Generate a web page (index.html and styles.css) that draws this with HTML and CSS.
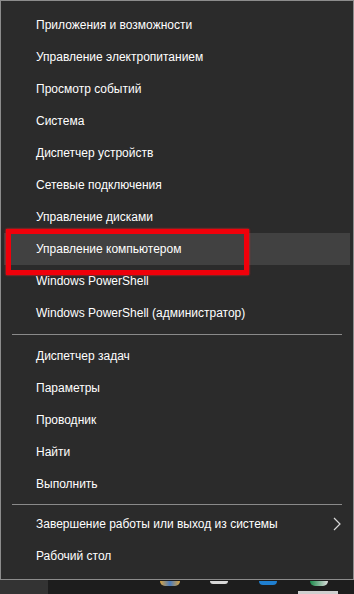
FILE: index.html
```html
<!DOCTYPE html>
<html lang="ru">
<head>
<meta charset="utf-8">
<link rel="stylesheet" href="styles.css">
</head>
<body>
<div class="menu">
  <ul class="group g1">
    <li class="item">Приложения и возможности</li>
    <li class="item">Управление электропитанием</li>
    <li class="item">Просмотр событий</li>
    <li class="item">Система</li>
    <li class="item">Диспетчер устройств</li>
    <li class="item">Сетевые подключения</li>
    <li class="item">Управление дисками</li>
    <li class="item active">Управление компьютером</li>
    <li class="item">Windows PowerShell</li>
    <li class="item">Windows PowerShell (администратор)</li>
  </ul>
  <div class="sep sep1"></div>
  <ul class="group">
    <li class="item">Диспетчер задач</li>
    <li class="item">Параметры</li>
    <li class="item">Проводник</li>
    <li class="item">Найти</li>
    <li class="item">Выполнить</li>
  </ul>
  <div class="sep sep2"></div>
  <ul class="group">
    <li class="item sub">Завершение работы или выход из системы
      <svg class="chev" width="8" height="14" viewBox="0 0 8 14"><path d="M1 1 L7 7 L1 13" fill="none" stroke="#d8d8d8" stroke-width="1.2"/></svg>
    </li>
    <li class="item">Рабочий стол</li>
  </ul>
  <div class="mark"></div>
</div>
<div class="taskbar">
  <div class="tb-start"></div>
  <div class="tb-icons">
    <span class="ic ic1"></span>
    <span class="ic ic2"></span>
    <span class="ic ic3"></span>
    <span class="ic ic4"></span>
    <span class="ic ic5"></span>
  </div>
</div>
</body>
</html>
```

FILE: styles.css
```css
html, body {
  margin: 0;
  padding: 0;
  background: #1d1d1d;
  width: 354px;
  height: 594px;
  overflow: hidden;
}
.menu {
  position: relative;
  box-sizing: border-box;
  width: 354px;
  height: 580px;
  background: #2b2b2b;
  border: 1px solid #8c8c8c;
  padding: 8px 3px 8px 3px;
  font-family: "Liberation Sans", Arial, sans-serif;
  font-size: 12px;
  color: #ffffff;
}
.group {
  list-style: none;
  margin: 0;
  padding: 0;
}
.item {
  height: 32px;
  line-height: 32px;
  padding-left: 32px;
  display: flex;
  align-items: center;
  justify-content: space-between;
  padding-right: 9px;
  white-space: nowrap;
}
.item.active {
  background: #414141;
}
.chev {
  display: block;
}
.sep {
  height: 1px;
  background: #8a8a8a;
  margin: 5px 8px 5px 8px;
}
.sep2 {
  margin: 4px 8px 3px 8px;
}
.mark {
  position: absolute;
  left: 5px;
  top: 228px;
  width: 233px;
  height: 36px;
  border: 5px solid #f0000a;
  box-shadow: 0 0 2px #ff2020;
}
.taskbar {
  display: flex;
  height: 14px;
  background: #1d1d1d;
}
.tb-start {
  width: 48px;
  background: #333333;
}
.tb-icons {
  position: relative;
  flex: 1;
}
.ic {
  position: absolute;
  top: 1px;
  height: 5px;
  border-radius: 0 0 6px 6px;
}
.ic1 { left: 112px; width: 20px; background: linear-gradient(90deg, #d9a441, #4a7bbd, #d9a441); }
.ic2 { left: 162px; width: 18px; background: #d8d8d8; height: 3px; border-radius: 0 0 3px 3px; }
.ic3 { left: 211px; width: 18px; background: #1f7fd0; height: 4px; }
.ic4 { left: 262px; width: 18px; background: linear-gradient(90deg, #1a8a4a, #ddd); }
.ic5 { left: 250px; top: 11px; width: 40px; height: 3px; background: #cfcfcf; border-radius: 0; }
```
